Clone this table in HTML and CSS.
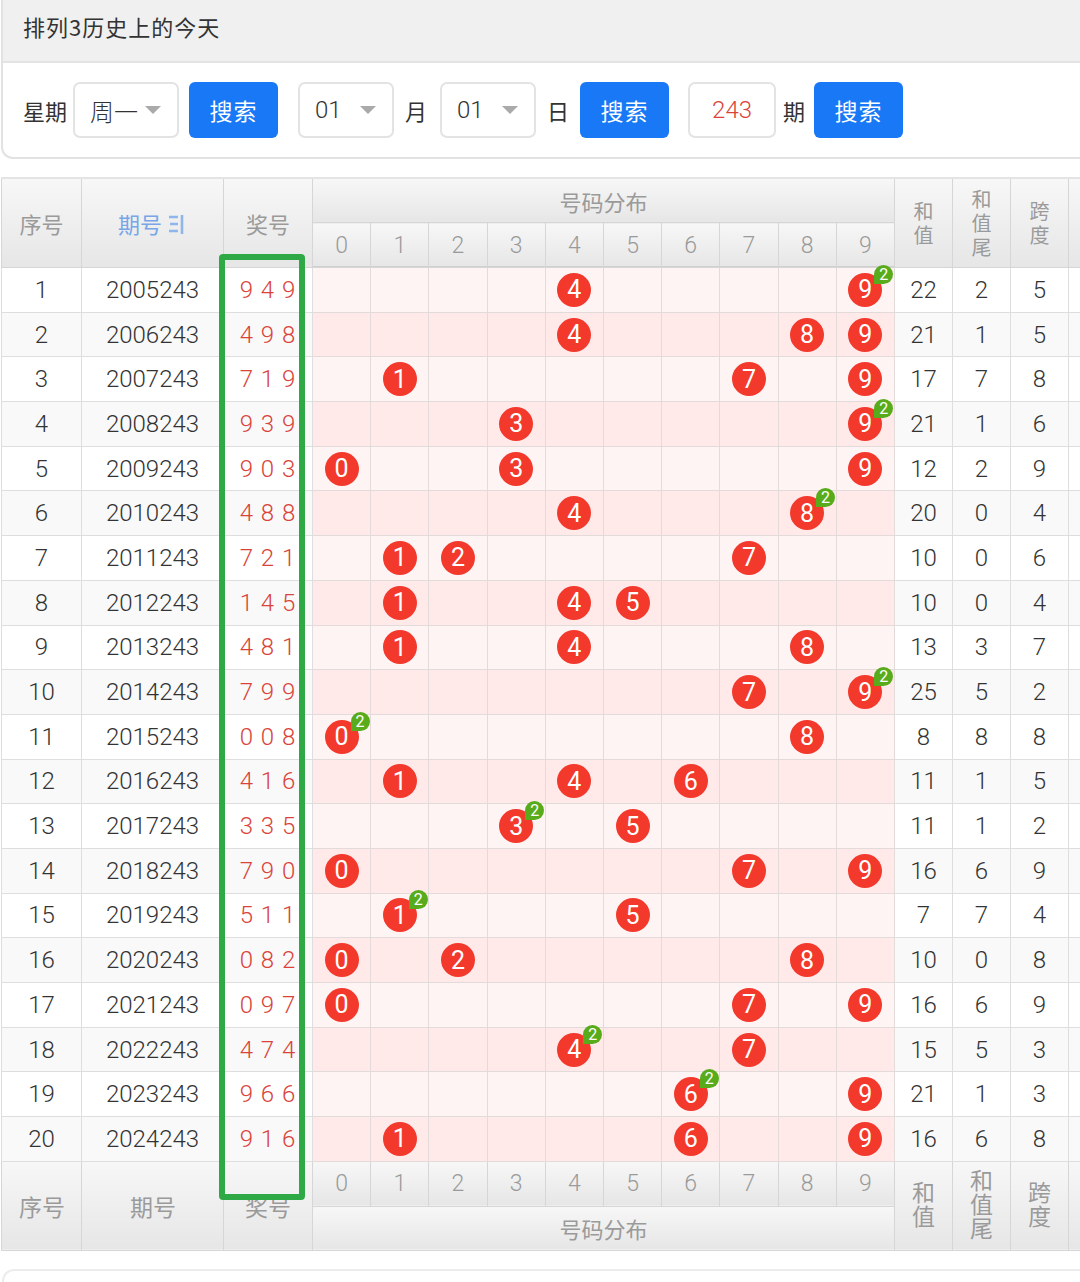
FILE: index.html
```html
<!DOCTYPE html>
<html lang="zh-CN">
<head>
<meta charset="utf-8">
<title>排列3历史上的今天</title>
<link rel="stylesheet" href="styles.css">
</head>
<body>
<div class="panel">
  <div class="panel-head">排列3历史上的今天</div>
  <div class="panel-body">
    <span class="lbl">星期</span>
    <div class="sel w106 ml6"><span>周一</span><i class="caret"></i></div>
    <button class="btn ml10">搜索</button>
    <div class="sel w96 ml20"><span>01</span><i class="caret"></i></div>
    <span class="lbl ml11">月</span>
    <div class="sel w96 ml13"><span>01</span><i class="caret"></i></div>
    <span class="lbl ml11">日</span>
    <button class="btn ml11">搜索</button>
    <div class="inp ml19">243</div>
    <span class="lbl ml7">期</span>
    <button class="btn ml9">搜索</button>
  </div>
</div>

<div class="tablewrap">
<table class="trend">
  <colgroup>
    <col class="c-no"><col class="c-issue"><col class="c-win">
    <col class="c-n"><col class="c-n"><col class="c-n"><col class="c-n"><col class="c-n">
    <col class="c-n"><col class="c-n"><col class="c-n"><col class="c-n"><col class="c-n">
    <col class="c-s"><col class="c-s"><col class="c-s"><col class="c-x">
  </colgroup>
  <thead>
    <tr class="h1">
      <th rowspan="2">序号</th>
      <th rowspan="2" class="sort">期号 <svg class="sorticon" width="20" height="24" viewBox="0 0 20 24"><path d="M2 5h9M3 12h8M2 19h9M15 3v19" stroke="#8fb6ec" stroke-width="2.6" fill="none"/></svg></th>
      <th rowspan="2">奖号</th>
      <th colspan="10" class="dist">号码分布</th>
      <th rowspan="2" class="vt">和<br>值</th>
      <th rowspan="2" class="vt">和<br>值<br>尾</th>
      <th rowspan="2" class="vt">跨<br>度</th>
      <th rowspan="2"></th>
    </tr>
    <tr class="h2">
      <th>0</th><th>1</th><th>2</th><th>3</th><th>4</th><th>5</th><th>6</th><th>7</th><th>8</th><th>9</th>
    </tr>
  </thead>
  <tbody>
    <tr><td>1</td><td>2005243</td><td class="win">9 4 9</td><td class="p"></td><td class="p"></td><td class="p"></td><td class="p"></td><td class="p"><span class="ball">4</span></td><td class="p"></td><td class="p"></td><td class="p"></td><td class="p"></td><td class="p"><span class="ball">9<i class="rep">2</i></span></td><td>22</td><td>2</td><td>5</td><td></td></tr>
    <tr><td>2</td><td>2006243</td><td class="win">4 9 8</td><td class="p"></td><td class="p"></td><td class="p"></td><td class="p"></td><td class="p"><span class="ball">4</span></td><td class="p"></td><td class="p"></td><td class="p"></td><td class="p"><span class="ball">8</span></td><td class="p"><span class="ball">9</span></td><td>21</td><td>1</td><td>5</td><td></td></tr>
    <tr><td>3</td><td>2007243</td><td class="win">7 1 9</td><td class="p"></td><td class="p"><span class="ball">1</span></td><td class="p"></td><td class="p"></td><td class="p"></td><td class="p"></td><td class="p"></td><td class="p"><span class="ball">7</span></td><td class="p"></td><td class="p"><span class="ball">9</span></td><td>17</td><td>7</td><td>8</td><td></td></tr>
    <tr><td>4</td><td>2008243</td><td class="win">9 3 9</td><td class="p"></td><td class="p"></td><td class="p"></td><td class="p"><span class="ball">3</span></td><td class="p"></td><td class="p"></td><td class="p"></td><td class="p"></td><td class="p"></td><td class="p"><span class="ball">9<i class="rep">2</i></span></td><td>21</td><td>1</td><td>6</td><td></td></tr>
    <tr><td>5</td><td>2009243</td><td class="win">9 0 3</td><td class="p"><span class="ball">0</span></td><td class="p"></td><td class="p"></td><td class="p"><span class="ball">3</span></td><td class="p"></td><td class="p"></td><td class="p"></td><td class="p"></td><td class="p"></td><td class="p"><span class="ball">9</span></td><td>12</td><td>2</td><td>9</td><td></td></tr>
    <tr><td>6</td><td>2010243</td><td class="win">4 8 8</td><td class="p"></td><td class="p"></td><td class="p"></td><td class="p"></td><td class="p"><span class="ball">4</span></td><td class="p"></td><td class="p"></td><td class="p"></td><td class="p"><span class="ball">8<i class="rep">2</i></span></td><td class="p"></td><td>20</td><td>0</td><td>4</td><td></td></tr>
    <tr><td>7</td><td>2011243</td><td class="win">7 2 1</td><td class="p"></td><td class="p"><span class="ball">1</span></td><td class="p"><span class="ball">2</span></td><td class="p"></td><td class="p"></td><td class="p"></td><td class="p"></td><td class="p"><span class="ball">7</span></td><td class="p"></td><td class="p"></td><td>10</td><td>0</td><td>6</td><td></td></tr>
    <tr><td>8</td><td>2012243</td><td class="win">1 4 5</td><td class="p"></td><td class="p"><span class="ball">1</span></td><td class="p"></td><td class="p"></td><td class="p"><span class="ball">4</span></td><td class="p"><span class="ball">5</span></td><td class="p"></td><td class="p"></td><td class="p"></td><td class="p"></td><td>10</td><td>0</td><td>4</td><td></td></tr>
    <tr><td>9</td><td>2013243</td><td class="win">4 8 1</td><td class="p"></td><td class="p"><span class="ball">1</span></td><td class="p"></td><td class="p"></td><td class="p"><span class="ball">4</span></td><td class="p"></td><td class="p"></td><td class="p"></td><td class="p"><span class="ball">8</span></td><td class="p"></td><td>13</td><td>3</td><td>7</td><td></td></tr>
    <tr><td>10</td><td>2014243</td><td class="win">7 9 9</td><td class="p"></td><td class="p"></td><td class="p"></td><td class="p"></td><td class="p"></td><td class="p"></td><td class="p"></td><td class="p"><span class="ball">7</span></td><td class="p"></td><td class="p"><span class="ball">9<i class="rep">2</i></span></td><td>25</td><td>5</td><td>2</td><td></td></tr>
    <tr><td>11</td><td>2015243</td><td class="win">0 0 8</td><td class="p"><span class="ball">0<i class="rep">2</i></span></td><td class="p"></td><td class="p"></td><td class="p"></td><td class="p"></td><td class="p"></td><td class="p"></td><td class="p"></td><td class="p"><span class="ball">8</span></td><td class="p"></td><td>8</td><td>8</td><td>8</td><td></td></tr>
    <tr><td>12</td><td>2016243</td><td class="win">4 1 6</td><td class="p"></td><td class="p"><span class="ball">1</span></td><td class="p"></td><td class="p"></td><td class="p"><span class="ball">4</span></td><td class="p"></td><td class="p"><span class="ball">6</span></td><td class="p"></td><td class="p"></td><td class="p"></td><td>11</td><td>1</td><td>5</td><td></td></tr>
    <tr><td>13</td><td>2017243</td><td class="win">3 3 5</td><td class="p"></td><td class="p"></td><td class="p"></td><td class="p"><span class="ball">3<i class="rep">2</i></span></td><td class="p"></td><td class="p"><span class="ball">5</span></td><td class="p"></td><td class="p"></td><td class="p"></td><td class="p"></td><td>11</td><td>1</td><td>2</td><td></td></tr>
    <tr><td>14</td><td>2018243</td><td class="win">7 9 0</td><td class="p"><span class="ball">0</span></td><td class="p"></td><td class="p"></td><td class="p"></td><td class="p"></td><td class="p"></td><td class="p"></td><td class="p"><span class="ball">7</span></td><td class="p"></td><td class="p"><span class="ball">9</span></td><td>16</td><td>6</td><td>9</td><td></td></tr>
    <tr><td>15</td><td>2019243</td><td class="win">5 1 1</td><td class="p"></td><td class="p"><span class="ball">1<i class="rep">2</i></span></td><td class="p"></td><td class="p"></td><td class="p"></td><td class="p"><span class="ball">5</span></td><td class="p"></td><td class="p"></td><td class="p"></td><td class="p"></td><td>7</td><td>7</td><td>4</td><td></td></tr>
    <tr><td>16</td><td>2020243</td><td class="win">0 8 2</td><td class="p"><span class="ball">0</span></td><td class="p"></td><td class="p"><span class="ball">2</span></td><td class="p"></td><td class="p"></td><td class="p"></td><td class="p"></td><td class="p"></td><td class="p"><span class="ball">8</span></td><td class="p"></td><td>10</td><td>0</td><td>8</td><td></td></tr>
    <tr><td>17</td><td>2021243</td><td class="win">0 9 7</td><td class="p"><span class="ball">0</span></td><td class="p"></td><td class="p"></td><td class="p"></td><td class="p"></td><td class="p"></td><td class="p"></td><td class="p"><span class="ball">7</span></td><td class="p"></td><td class="p"><span class="ball">9</span></td><td>16</td><td>6</td><td>9</td><td></td></tr>
    <tr><td>18</td><td>2022243</td><td class="win">4 7 4</td><td class="p"></td><td class="p"></td><td class="p"></td><td class="p"></td><td class="p"><span class="ball">4<i class="rep">2</i></span></td><td class="p"></td><td class="p"></td><td class="p"><span class="ball">7</span></td><td class="p"></td><td class="p"></td><td>15</td><td>5</td><td>3</td><td></td></tr>
    <tr><td>19</td><td>2023243</td><td class="win">9 6 6</td><td class="p"></td><td class="p"></td><td class="p"></td><td class="p"></td><td class="p"></td><td class="p"></td><td class="p"><span class="ball">6<i class="rep">2</i></span></td><td class="p"></td><td class="p"></td><td class="p"><span class="ball">9</span></td><td>21</td><td>1</td><td>3</td><td></td></tr>
    <tr><td>20</td><td>2024243</td><td class="win">9 1 6</td><td class="p"></td><td class="p"><span class="ball">1</span></td><td class="p"></td><td class="p"></td><td class="p"></td><td class="p"></td><td class="p"><span class="ball">6</span></td><td class="p"></td><td class="p"></td><td class="p"><span class="ball">9</span></td><td>16</td><td>6</td><td>8</td><td></td></tr>
  </tbody>
  <tfoot>
    <tr class="h2">
      <th rowspan="2">序号</th>
      <th rowspan="2">期号</th>
      <th rowspan="2">奖号</th>
      <th>0</th><th>1</th><th>2</th><th>3</th><th>4</th><th>5</th><th>6</th><th>7</th><th>8</th><th>9</th>
      <th rowspan="2" class="vt">和<br>值</th>
      <th rowspan="2" class="vt">和<br>值<br>尾</th>
      <th rowspan="2" class="vt">跨<br>度</th>
      <th rowspan="2"></th>
    </tr>
    <tr class="h1">
      <th colspan="10" class="dist">号码分布</th>
    </tr>
  </tfoot>
</table>
<div class="highlight"></div>
</div>

<div class="nextpanel"></div>
</body>
</html>
```

FILE: styles.css
```css
html, body {
  margin: 0;
  padding: 0;
}
body {
  width: 1080px;
  overflow: hidden;
  background: #fff;
  font-family: Roboto, "Noto Sans CJK SC", sans-serif;
  color: #333;
}

/* top search panel */
.panel {
  margin-left: 1px;
  border: 2px solid #e2e2e2;
  border-top: none;
  border-right: none;
  border-radius: 0 0 0 12px;
  overflow: hidden;
}
.panel-head {
  box-sizing: border-box;
  height: 63px;
  background: #f0f0f0;
  border-bottom: 2px solid #e3e3e3;
  display: flex;
  align-items: flex-start;
  padding: 10px 0 0 20px;
  font-family: "Noto Sans CJK SC", sans-serif;
  font-size: 22px;
  line-height: 32px;
  color: #333;
  letter-spacing: 1px;
}
.panel-body {
  height: 94px;
  display: flex;
  align-items: center;
  padding-left: 20px;
}
.lbl {
  font-family: "Noto Sans CJK SC", sans-serif;
  font-size: 22px;
  color: #333;
}
.sel, .inp {
  box-sizing: border-box;
  height: 56px;
  border: 2px solid #e3e3e3;
  border-radius: 7px;
  display: flex;
  align-items: center;
  font-size: 24px;
  color: #333;
  background: #fff;
}
.sel span {
  font-family: Roboto, "Noto Sans CJK SC", sans-serif;
  font-weight: 300;
  padding-left: 15px;
  flex: 1;
}
.caret {
  width: 0;
  height: 0;
  border-left: 8px solid transparent;
  border-right: 8px solid transparent;
  border-top: 8px solid #aaa;
  margin-right: 16px;
}
.w106 { width: 106px; }
.w96 { width: 96px; }
.inp {
  width: 88px;
  justify-content: center;
  color: #d9433a;
  font-weight: 300;
}
.btn {
  box-sizing: border-box;
  width: 89px;
  height: 56px;
  border: none;
  border-radius: 6px;
  background: #1878f6;
  color: #fff;
  font-family: "Noto Sans CJK SC", sans-serif;
  font-size: 23px;
  padding: 0;
  letter-spacing: 1px;
}
.ml6 { margin-left: 6px; }
.ml7 { margin-left: 7px; }
.ml9 { margin-left: 9px; }
.ml10 { margin-left: 10px; }
.ml11 { margin-left: 11px; }
.ml13 { margin-left: 13px; }
.ml19 { margin-left: 19px; }
.ml20 { margin-left: 20px; }

/* trend table */
.tablewrap {
  position: relative;
  margin-top: 18px;
  width: 1080px;
  overflow: hidden;
}
.trend {
  border-collapse: collapse;
  table-layout: fixed;
  width: 1128px;
  margin-left: 1px;
}
.c-no { width: 80px; }
.c-issue { width: 142px; }
.c-win { width: 89px; }
.c-n { width: 58.2px; }
.c-s { width: 58px; }
.c-x { width: 60px; }

.trend th {
  background: linear-gradient(#f7f7f7, #e6e6e6);
  color: #9a9a9a;
  font-weight: normal;
  border: 1px solid #d6d6d6;
  font-size: 22px;
  font-family: "Noto Sans CJK SC", sans-serif;
  padding: 0;
  text-align: center;
}
.trend tr.h1 th { height: 43px; }
.trend tr.h2 th { height: 44px; }
.trend tr.h2 th {
  font-family: Roboto, sans-serif;
  font-weight: 300;
  font-size: 23px;
}
.trend th.sort {
  color: #78a6e6;
}
.sorticon {
  vertical-align: -3px;
}
.trend th.vt {
  line-height: 24px;
  font-size: 20px;
}
.trend thead tr.h1 th { border-top: 2px solid #e4e4e4; }
.trend thead tr.h2 th { box-shadow: inset 0 -1px 0 #d0d0d0; }
.trend th.dist { text-align: center; }

.trend td {
  height: 43.7px;
  border: 1px solid #dedede;
  text-align: center;
  font-size: 24px;
  font-weight: 300;
  color: #333;
  padding: 0;
  background: #fff;
}
.trend tbody tr:nth-child(even) td { background: #f9f9f9; }
.trend td.win {
  color: #d9433a;
  letter-spacing: 1px;
  white-space: pre;
}
.trend tbody tr:nth-child(odd) td.p { background: #fff4f4; }
.trend tbody tr:nth-child(even) td.p { background: #ffe9e9; }
.trend td.p { border-color: #e3dada; }

.ball {
  position: relative;
  display: inline-flex;
  align-items: center;
  justify-content: center;
  width: 34px;
  height: 34px;
  border-radius: 50%;
  background: #f3382c;
  color: #fff;
  font-size: 25px;
  font-weight: 400;
  line-height: 1;
  vertical-align: middle;
}
.rep {
  position: absolute;
  left: 26px;
  top: -8px;
  width: 19px;
  height: 19px;
  border-radius: 50% 50% 50% 0;
  background: #58ac1c;
  color: #fff;
  font-style: normal;
  font-size: 16px;
  line-height: 19px;
  text-align: center;
  z-index: 2;
}

.highlight {
  position: absolute;
  left: 219px;
  top: 77px;
  width: 86px;
  height: 946px;
  box-sizing: border-box;
  border: 6px solid #2ea945;
  border-radius: 4px;
  z-index: 3;
}

.nextpanel {
  margin: 18px 0 0 2px;
  height: 40px;
  border: 2px solid #ececec;
  border-right: none;
  border-bottom: none;
  border-radius: 12px 0 0 0;
}
```
